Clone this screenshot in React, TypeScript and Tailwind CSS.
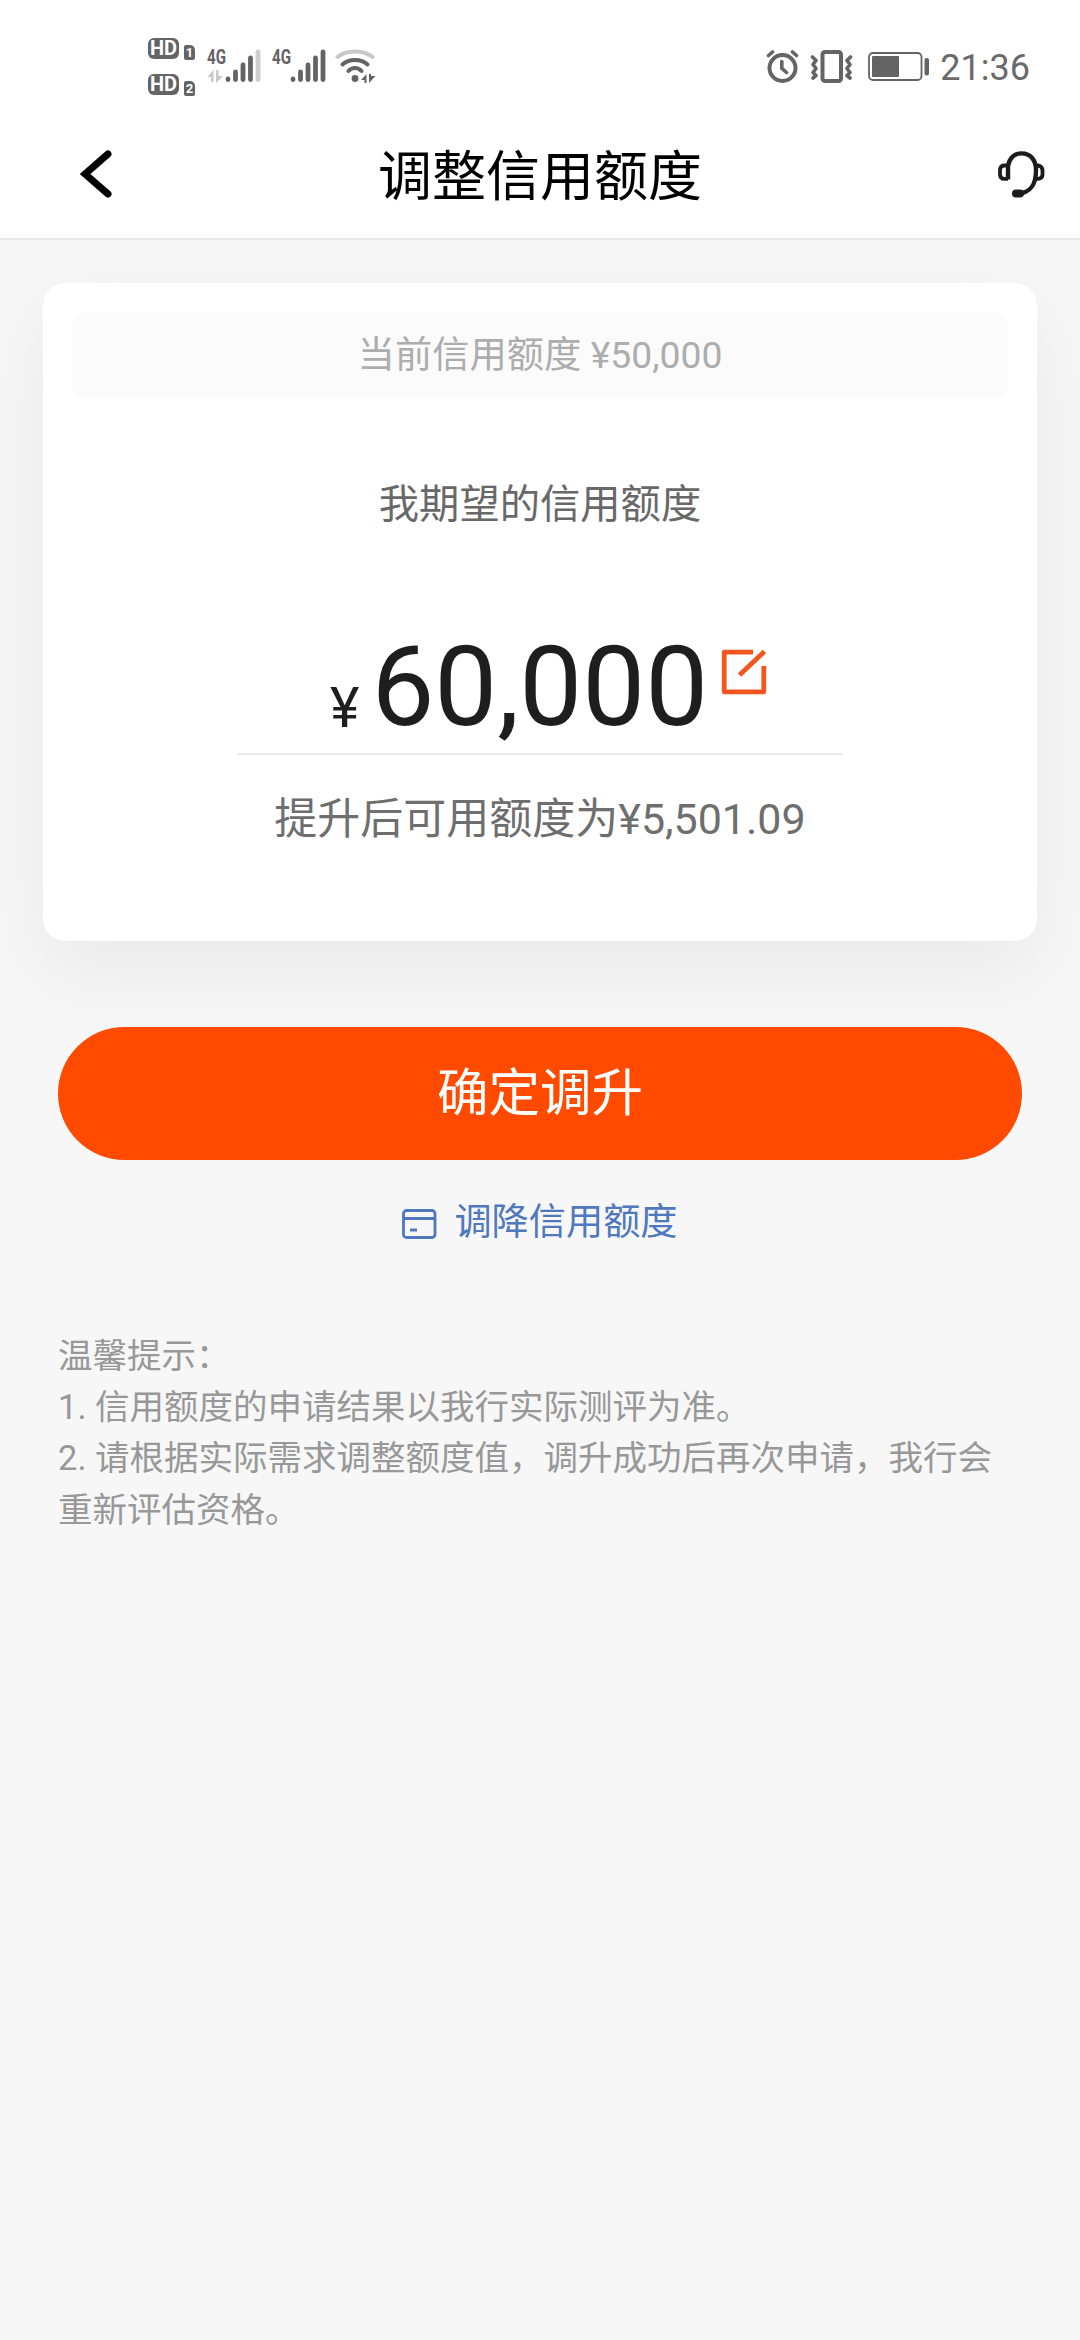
import React from "react";

function HdBadge({ n }: { n: string }) {
  return (
    <div className="flex h-[22px] items-end gap-[5px]">
      <span className="flex h-[21px] w-[31px] items-center justify-center self-start rounded-[6px] bg-[#646464] font-['Roboto',sans-serif] text-[20px] font-bold leading-[21px] text-white">
        HD
      </span>
      <span className="flex h-[15px] w-[11px] items-center justify-center rounded-[2px] rounded-tr-[5px] bg-[#646464] font-['Roboto',sans-serif] text-[13px] font-bold leading-[15px] text-white">
        {n}
      </span>
    </div>
  );
}

function Signal({ weak }: { weak?: boolean }) {
  return (
    <svg className="overflow-visible" width="55" height="36" viewBox="0 0 55 36" fill="none">
      <text x="0" y="15.5" fill="#646464" fontFamily="Roboto, sans-serif" fontWeight="700" fontSize="20" textLength="19" lengthAdjust="spacingAndGlyphs">
        4G
      </text>
      {weak && <path d="M6.500 22v12H4V29H0.500ZM9 22h2.500v6h4.500L9 35Z" fill="#c8c8c8" />}
      <g stroke="#646464" strokeWidth="4.800" strokeLinecap="round">
        <path d="M21 31v0.500M28.500 24v7.500M36 17v14.500M43.500 10V31.500" />
        <path d="M51 4V31.500" stroke={weak ? "#cdcdcd" : "#646464"} />
      </g>
    </svg>
  );
}

function Wifi() {
  return (
    <svg width="42" height="36" viewBox="0 0 42 36" fill="none" strokeWidth="4" strokeLinecap="round">
      <path d="M2.500 9C11 1.500 29 1.500 37.500 9" stroke="#c8c8c8" />
      <path d="M7.500 16.500C14 10.500 26 10.500 32.500 16.500M13.500 23C17 19 23 19 26.500 23" stroke="#646464" />
      <circle cx="20" cy="30.500" r="3.400" fill="#646464" />
      <path d="M31.500 26v9h-2V32H26ZM34 26h2v2h4.500L34 35Z" fill="#646464" />
    </svg>
  );
}

function Alarm() {
  return (
    <svg width="34" height="36" viewBox="0 0 34 36" fill="none" stroke="#646464" strokeWidth="4" strokeLinecap="round">
      <circle cx="16.500" cy="19" r="13" />
      <path d="M15.800 12.500V19.300L20.500 23.500M2.500 6.500L6.500 3M30.500 6.500L26.500 3" strokeWidth="3.600" />
    </svg>
  );
}

function Vibrate() {
  return (
    <svg width="44" height="34" viewBox="0 0 44 34" fill="none" stroke="#646464" strokeLinecap="round" strokeLinejoin="round">
      <rect x="12.500" y="2" width="18.500" height="29" rx="2.500" strokeWidth="4" />
      <path d="M2.500 7L6 10.500L3 14.500L6 18.500L3 22.500L6 25.500L3 28M40.500 7L37 10.500L40 14.500L37 18.500L40 22.500L37 25.500L40 28" strokeWidth="3.600" />
    </svg>
  );
}

function Battery() {
  return (
    <svg width="62" height="30" viewBox="0 0 62 30" fill="none">
      <rect x="1" y="1" width="52.500" height="27" rx="4" stroke="#646464" strokeWidth="1.800" />
      <rect x="4" y="4" width="27" height="21" rx="1" fill="#646464" />
      <rect x="56.500" y="6" width="4.500" height="17.500" rx="2" fill="#646464" />
    </svg>
  );
}

function StatusBar() {
  return (
    <div className="flex h-[130px] justify-between">
      <div className="flex pl-[148px]">
        <div className="flex flex-col gap-[14px] pt-[38px]">
          <HdBadge n="1" />
          <HdBadge n="2" />
        </div>
        <div className="flex pl-[12px] pt-[48px]">
          <Signal weak />
          <div className="pl-[10px]">
            <Signal />
          </div>
          <div className="pl-[8px]">
            <Wifi />
          </div>
        </div>
      </div>
      <div className="flex pr-[50px] pt-[49px]">
        <div className="pr-[10px]">
          <Alarm />
        </div>
        <div className="pr-[14px] pt-px">
          <Vibrate />
        </div>
        <div className="pr-[10px] pt-[3px]">
          <Battery />
        </div>
        <span className="mt-[-1px] h-[40px] font-['Roboto',sans-serif] text-[36px] leading-[40px] text-[#6a6a6a]">21:36</span>
      </div>
    </div>
  );
}

function Header() {
  return (
    <header className="grid h-[110px] grid-cols-[1fr_auto_1fr] items-start border-b-2 border-[#e8e8e8] pl-[80px] pr-[34px]">
      <svg className="mt-[18px]" width="34" height="52" viewBox="0 0 34 52" fill="none" stroke="#000" strokeWidth="7" strokeLinecap="round">
        <path d="M28 6L5 26L28 46" />
      </svg>
      <h1 className="ml-[-46px] mt-[14px] text-[54px] leading-[68px] text-black">调整信用额度</h1>
      <svg className="mt-[20px] justify-self-end" width="50" height="50" viewBox="0 0 50 50" fill="none" stroke="#1c1c1c" strokeWidth="4.400">
        <path d="M12 29.500V16C13.500 8 18.500 3.400 25.500 3.400C34 3.400 40 9.500 40 20C40 35 35 42.500 22 43.500" />
        <path d="M12 15.500H8.500Q4.500 15.500 4 19.500V25Q4.500 29 8.500 28.800H12M40 15.500H42Q46 16 46.500 20V25Q46 28.800 42 28.800H39" strokeWidth="3.800" />
        <rect x="16" y="39.500" width="12" height="8" rx="4" fill="#1c1c1c" stroke="none" />
      </svg>
    </header>
  );
}

function LimitCard() {
  return (
    <section className="mx-[43px] mt-[43px] flex h-[658px] flex-col items-center rounded-[22px] bg-white shadow-[0_30px_80px_rgba(0,0,0,0.06)]">
      <div className="mt-[29px] h-[86px] w-[936px] rounded-[12px] bg-[#fbfbfb] text-center text-[37.3px] leading-[86px] text-[#adadad]">
        当前信用额度 ¥50,000
      </div>
      <div className="mt-[77px] text-[40.3px] leading-[60px] text-[#686868]">我期望的信用额度</div>
      <div className="mt-[84px] flex h-[136px] w-[604px] border-b-2 border-[#e9e9e9] pl-[92px] text-[#1e1e1e]">
        <span className="mt-[56px] text-[56px] leading-[66px]">¥</span>
        <span className="ml-[12px] mt-[8px] text-[112px] leading-[120px]">60,000</span>
        <svg className="ml-[12px] mt-[29px] shrink-0" width="48" height="48" viewBox="0 0 48 48" fill="none" stroke="#f0561d" strokeWidth="4.800">
          <path d="M33 4.200H4.200V43.800H43.800V18" strokeLinejoin="round" />
          <path d="M44.500 3.500L19.500 27" />
        </svg>
      </div>
      <div className="mt-[32px] text-[43px] leading-[64px] text-[#6e6e6e]">提升后可用额度为¥5,501.09</div>
    </section>
  );
}

export default function App() {
  return (
    <main lang="zh-CN" className="flex h-[2340px] w-[1080px] flex-col overflow-hidden bg-[#f7f7f7] font-['Roboto','Noto_Sans_CJK_SC',sans-serif]">
      <div className="bg-white">
        <StatusBar />
        <Header />
      </div>
      <LimitCard />
      <button className="mx-[58px] mt-[86px] h-[133px] shrink-0 rounded-full bg-[#ff4a00] text-[51.5px] leading-[130px] text-white">确定调升</button>
      <a className="mt-[32px] flex h-[60px] items-center justify-center text-[37.2px] leading-[60px] text-[#4f78bd]">
        <svg className="mr-[17px] mt-[4px]" width="35" height="30" viewBox="0 0 35 30" fill="none" stroke="#4f78bd" strokeWidth="2.800">
          <rect x="1.500" y="1.500" width="31.500" height="27" rx="3" />
          <path d="M2 9.500H33M8 21H15" />
        </svg>
        调降信用额度
      </a>
      <div className="ml-[58px] mt-[79px] w-[950px] text-[34.5px] leading-[51.2px] text-[#989898]">
        <p>温馨提示：</p>
        <p>1. 信用额度的申请结果以我行实际测评为准。</p>
        <p>2. 请根据实际需求调整额度值，调升成功后再次申请，我行会重新评估资格。</p>
      </div>
    </main>
  );
}
